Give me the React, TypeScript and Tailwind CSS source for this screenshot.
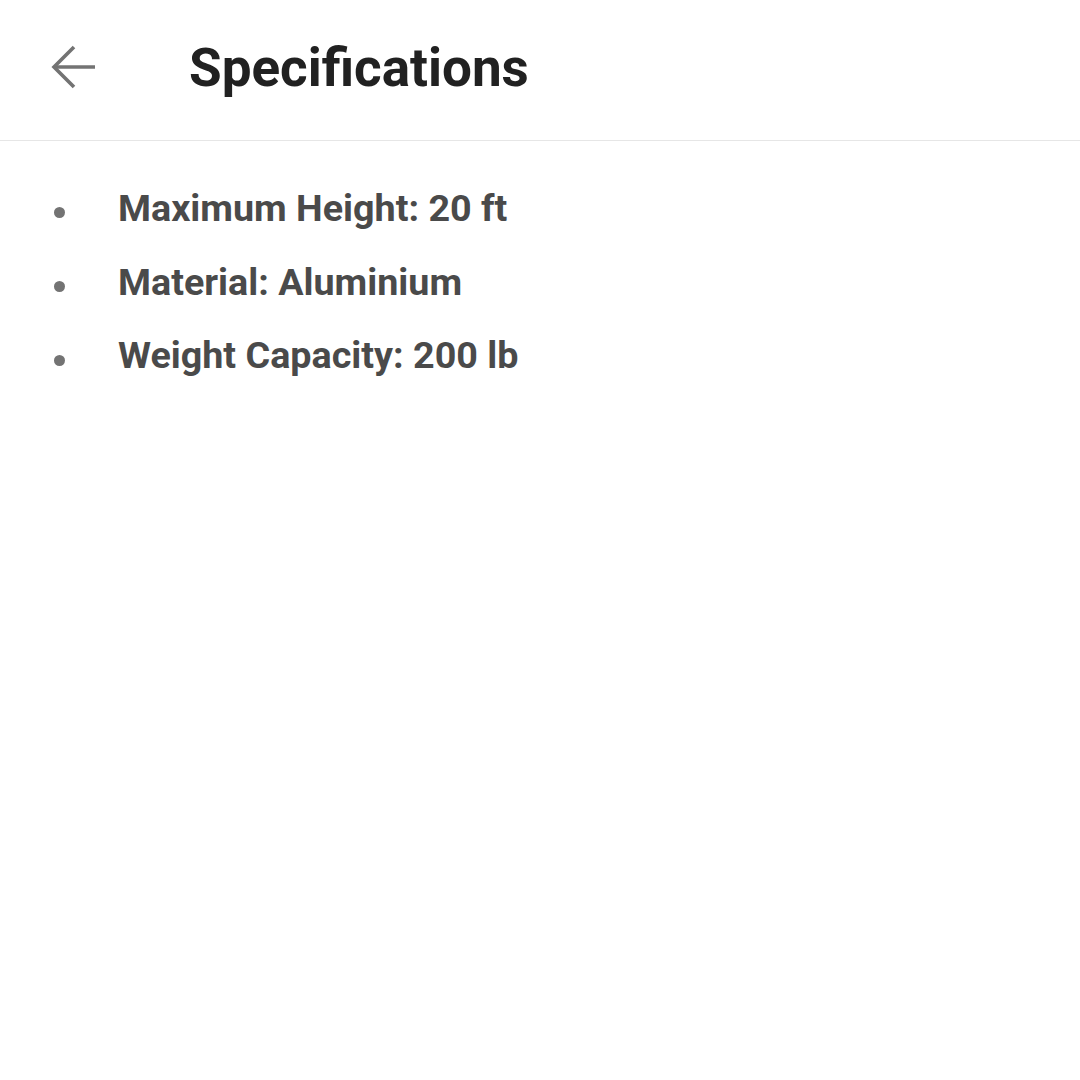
import React from "react";

const specs = ["Maximum Height: 20 ft", "Material: Aluminium", "Weight Capacity: 200 lb"];

function BackArrow() {
  return (
    <svg width="46" height="46" viewBox="0 0 46 46" fill="none" stroke="#737373" strokeWidth="3.6">
      <path d="M23 3 L3 23 L23 43" strokeLinejoin="miter" />
      <path d="M3 23 H44" />
    </svg>
  );
}

export default function App() {
  return (
    <div className="min-h-[1080px] w-[1080px] bg-white" style={{ fontFamily: "Roboto, sans-serif" }}>
      <header className="flex h-[141px] items-center border-b border-[#e6e6e6]">
        <div className="mb-[6px] ml-[51px] flex h-[46px] w-[46px] items-center">
          <BackArrow />
        </div>
        <h1 className="mb-[4px] ml-[92px] text-[53px] font-bold leading-none text-[#212121]">Specifications</h1>
      </header>
      <ul className="flex flex-col gap-[36px] pt-[49px]">
        {specs.map((s) => (
          <li key={s} className="flex items-center">
            <span className="ml-[54px] h-[11px] w-[11px] translate-y-[4px] rounded-full bg-[#737373]" />
            <span className="ml-[53px] text-[37.7px] font-bold leading-none text-[#4a4a4a]">{s}</span>
          </li>
        ))}
      </ul>
    </div>
  );
}
